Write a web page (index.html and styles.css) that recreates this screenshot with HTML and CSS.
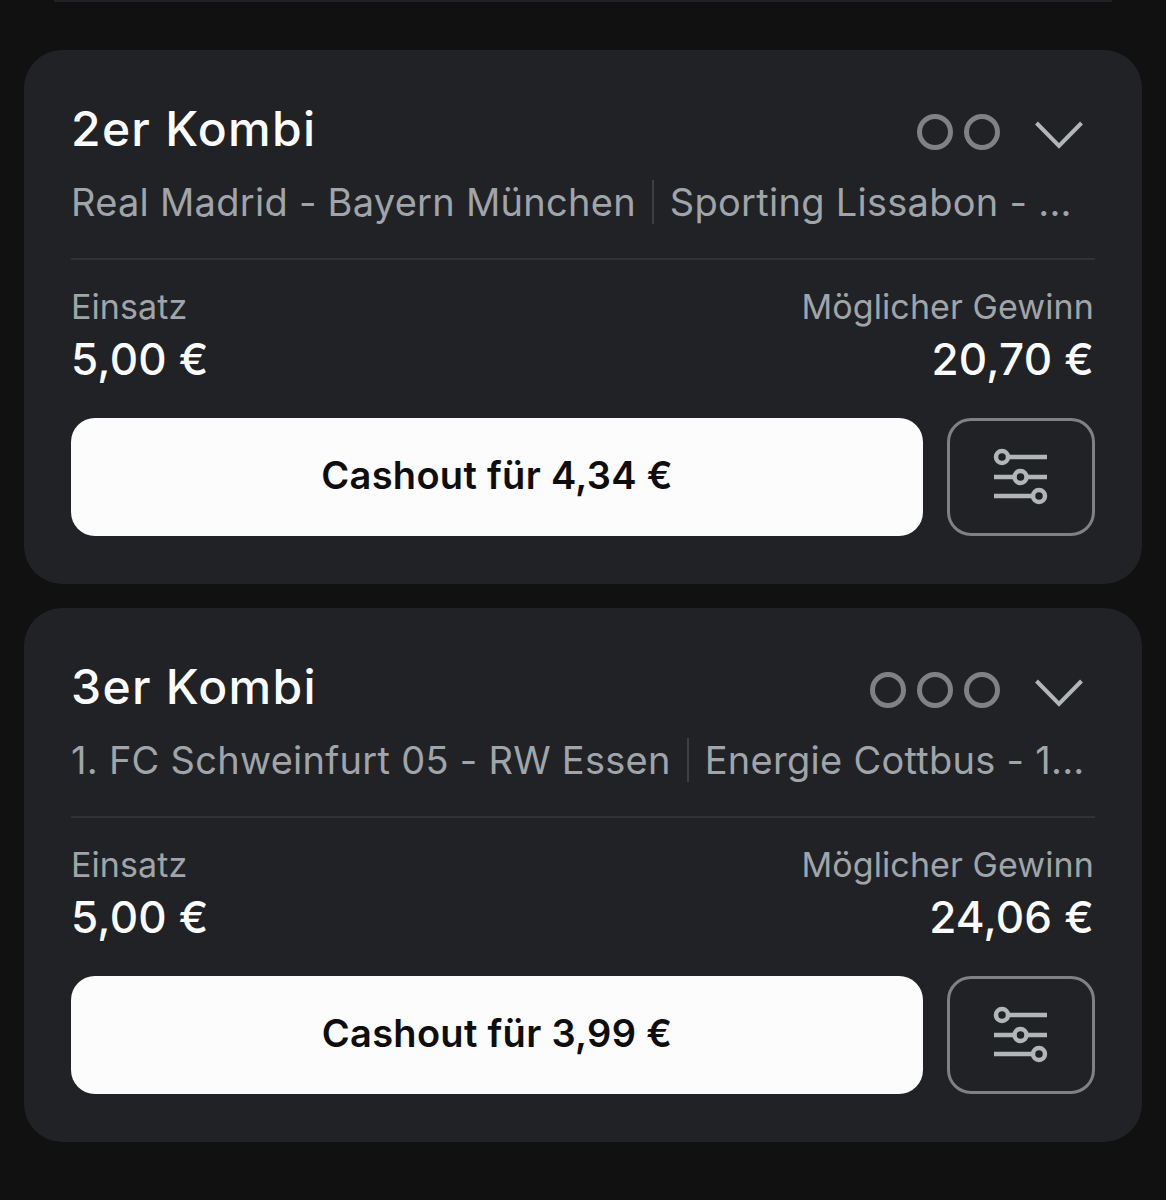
FILE: index.html
```html
<!DOCTYPE html>
<html lang="de">
<head>
    <meta charset="UTF-8">
    <meta name="viewport" content="width=device-width, initial-scale=1.0">
    <title>Meine Wetten</title>
    <link rel="stylesheet" href="styles.css">
</head>
<body>
    <div class="card-prev"></div>

    <div class="card">
        <div class="card-head">
            <h2>2er Kombi</h2>
            <div class="dots"><span class="dot"></span><span class="dot"></span></div>
            <svg class="chevron" viewBox="0 0 48 28"><path d="M1.5 2 L24 25 L46.5 2"/></svg>
        </div>
        <div class="matches">
            <span class="match">Real Madrid - Bayern München</span>
            <span class="match-rest">Sporting Lissabon - ...</span>
        </div>
        <div class="amounts">
            <div>
                <div class="label">Einsatz</div>
                <div class="value">5,00 €</div>
            </div>
            <div class="right">
                <div class="label">Möglicher Gewinn</div>
                <div class="value">20,70 €</div>
            </div>
        </div>
        <div class="actions">
            <button class="cashout">Cashout für 4,34 €</button>
            <button class="filter">
                <svg viewBox="0 0 54 54"><path d="M14 7 H53 M0 27 H53 M0 46 H40"/><circle cx="8" cy="7" r="6"/><circle cx="26.5" cy="27" r="6"/><circle cx="45" cy="46" r="6"/></svg>
            </button>
        </div>
    </div>

    <div class="card">
        <div class="card-head">
            <h2>3er Kombi</h2>
            <div class="dots"><span class="dot"></span><span class="dot"></span><span class="dot"></span></div>
            <svg class="chevron" viewBox="0 0 48 28"><path d="M1.5 2 L24 25 L46.5 2"/></svg>
        </div>
        <div class="matches">
            <span class="match">1. FC Schweinfurt 05 - RW Essen</span>
            <span class="match-rest">Energie Cottbus - 1...</span>
        </div>
        <div class="amounts">
            <div>
                <div class="label">Einsatz</div>
                <div class="value">5,00 €</div>
            </div>
            <div class="right">
                <div class="label">Möglicher Gewinn</div>
                <div class="value">24,06 €</div>
            </div>
        </div>
        <div class="actions">
            <button class="cashout">Cashout für 3,99 €</button>
            <button class="filter">
                <svg viewBox="0 0 54 54"><path d="M14 7 H53 M0 27 H53 M0 46 H40"/><circle cx="8" cy="7" r="6"/><circle cx="26.5" cy="27" r="6"/><circle cx="45" cy="46" r="6"/></svg>
            </button>
        </div>
    </div>
</body>
</html>
```

FILE: styles.css
```css
html, body {
    height: 100%;
}
body {
    font-family: Inter, "Liberation Sans", sans-serif;
    margin: 0;
    padding: 0 24px;
    background-color: #111112;
    overflow: hidden;
}
.card-prev {
    height: 2px;
    margin: 0 30px 48px;
    background: #212226;
}
.card {
    height: 534px;
    box-sizing: border-box;
    margin-bottom: 24px;
    padding: 48px 47px;
    background: #212226;
    border-radius: 38px;
}
.card-head {
    display: flex;
    align-items: center;
    height: 62px;
}
h2 {
    margin: 0;
    flex: 1;
    color: #fcfcfc;
    font-size: 48px;
    font-weight: 500;
    letter-spacing: 1.3px;
    line-height: 62px;
}
.dots {
    display: flex;
    gap: 11px;
    margin-right: 35px;
    margin-top: 6px;
}
.dot {
    width: 36px;
    height: 36px;
    box-sizing: border-box;
    border: 5px solid #7f8184;
    border-radius: 50%;
}
.chevron {
    width: 48px;
    height: 28px;
    margin-right: 12px;
    margin-top: 11px;
    fill: none;
    stroke: #b3b6b9;
    stroke-width: 4;
}
.matches {
    display: flex;
    align-items: center;
    height: 48px;
    margin-top: 18px;
    padding-bottom: 32px;
    border-bottom: 2px solid #303236;
    color: #a0a5a9;
    font-size: 38px;
    letter-spacing: 0.27px;
    line-height: 44px;
    white-space: nowrap;
}
.match {
    padding-right: 16px;
    border-right: 2px solid #3d3f43;
}
.match-rest {
    padding-left: 16px;
}
.amounts {
    display: flex;
    justify-content: space-between;
    margin-top: 25px;
}
.right {
    padding-right: 1px;
    text-align: right;
}
.label {
    color: #a0a5a9;
    font-size: 34px;
    letter-spacing: 0.1px;
    line-height: 44px;
}
.value {
    color: #fcfcfc;
    font-size: 44px;
    font-weight: 500;
    letter-spacing: 0.2px;
    line-height: 60px;
}
.actions {
    display: flex;
    gap: 24px;
    margin-top: 29px;
}
button {
    font-family: inherit;
    height: 118px;
    border-radius: 24px;
    cursor: pointer;
}
.cashout {
    flex: 1;
    padding: 0 0 4px;
    background: #fcfcfc;
    border: none;
    color: #0e0e10;
    font-size: 38px;
    font-weight: 600;
    letter-spacing: 0.3px;
}
.filter {
    display: flex;
    align-items: center;
    justify-content: center;
    width: 148px;
    padding: 0;
    background: none;
    border: 3px solid #7f8184;
}
.filter svg {
    width: 54px;
    height: 54px;
    overflow: visible;
    fill: #212226;
    stroke: #b3b6b9;
    stroke-width: 4.5;
}
```
